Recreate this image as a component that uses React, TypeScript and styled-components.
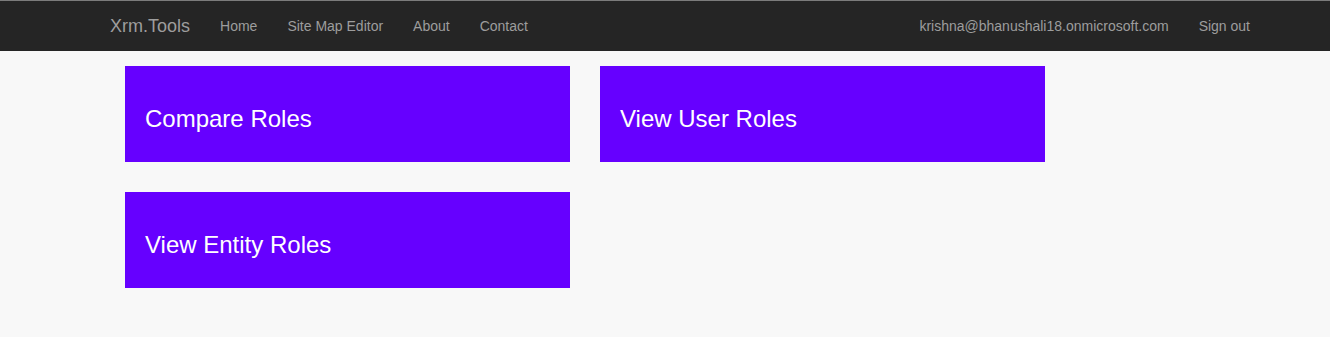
import styled, { createGlobalStyle } from "styled-components"

// **********
// data
// **********

const navLinks = ["Home", "Site Map Editor", "About", "Contact"]
const tiles = ["Compare Roles", "View User Roles", "View Entity Roles"]

// **********
// component
// **********

export default function App() {
	return (
		<>
			<GlobalStyle />
			<Navbar>
				<Container>
					<Left>
						<Brand href="#">Xrm.Tools</Brand>
						{navLinks.map((link) => (
							<NavLink key={link} href="#">
								{link}
							</NavLink>
						))}
					</Left>
					<Right>
						<NavLink href="#">krishna@bhanushali18.onmicrosoft.com</NavLink>
						<NavLink href="#">Sign out</NavLink>
					</Right>
				</Container>
			</Navbar>
			<Body>
				<TileGrid>
					{tiles.map((tile) => (
						<Tile key={tile} href="#">
							{tile}
						</Tile>
					))}
				</TileGrid>
			</Body>
		</>
	)
}

// **********
// styles
// **********

const GlobalStyle = createGlobalStyle`
	html,
	body {
		margin: 0;
		padding: 0;
		background: #f8f8f8;
		font-family: "Liberation Sans", Arial, sans-serif;
		font-size: 14px;
	}
`
const Navbar = styled.nav`
	height: 50px;
	background: #252525;
	border-top: 1px solid #7c7c7c;
`
const Container = styled.div`
	width: 1140px;
	margin: 0 auto;
	padding: 0 15px;
	display: flex;
	justify-content: space-between;
	height: 100%;
`
const Left = styled.div`
	display: flex;
	align-items: center;
`
const Right = styled.div`
	display: flex;
	align-items: center;
	margin-right: -30px;
`
const Brand = styled.a`
	padding: 15px;
	font-size: 18px;
	line-height: 20px;
	color: #9d9d9d;
	text-decoration: none;
`
const NavLink = styled.a`
	padding: 15px;
	line-height: 20px;
	color: #9d9d9d;
	text-decoration: none;
`
const Body = styled.main`
	width: 1140px;
	margin: 0 auto;
	padding: 15px 15px 0;
`
const TileGrid = styled.div`
	display: grid;
	grid-template-columns: 445px 445px;
	gap: 30px;
	padding-left: 30px;
`
const Tile = styled.a`
	box-sizing: border-box;
	height: 96px;
	padding: 40px 20px 0;
	background: #6600ff;
	color: #ffffff;
	font-size: 24px;
	line-height: 26px;
	text-decoration: none;
`
